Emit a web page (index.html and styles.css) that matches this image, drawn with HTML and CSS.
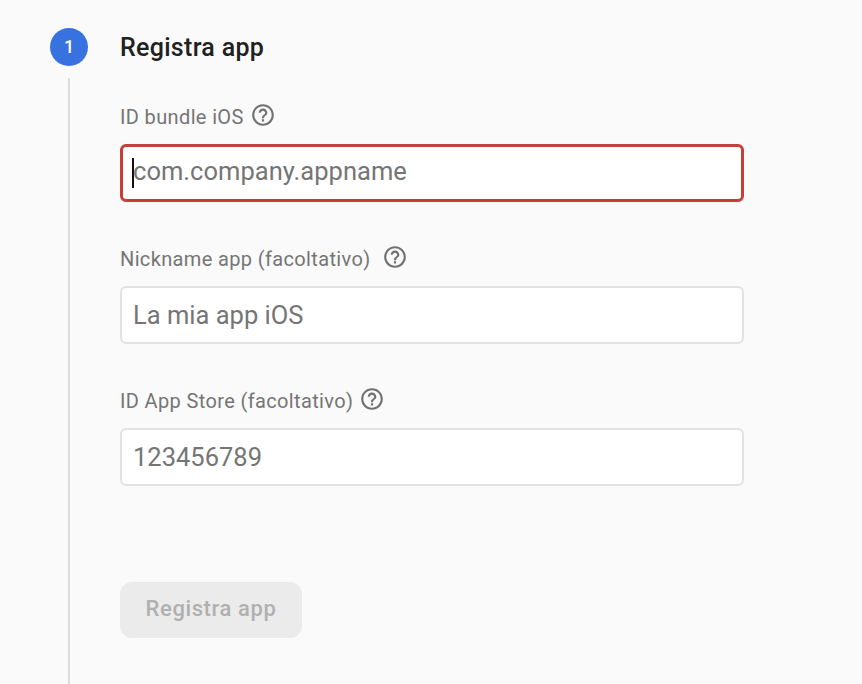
FILE: index.html
```html
<!DOCTYPE html>
<html lang="it">
<head>
<meta charset="utf-8">
<title>Registra app</title>
<link rel="stylesheet" href="styles.css">
</head>
<body>
<svg width="0" height="0" class="defs" aria-hidden="true">
  <symbol id="help" viewBox="0 0 24 24"><path d="M11 18h2v-2h-2v2zm1-16C6.480 2 2 6.480 2 12s4.480 10 10 10 10-4.480 10-10S17.520 2 12 2zm0 18c-4.410 0-8-3.590-8-8s3.590-8 8-8 8 3.590 8 8-3.590 8-8 8zm0-14c-2.210 0-4 1.790-4 4h2c0-1.100.9-2 2-2s2 .9 2 2c0 2-3 1.750-3 5h2c0-2.250 3-2.500 3-5 0-2.210-1.790-4-4-4z"/></symbol>
</svg>
<main class="step">
  <div class="rail"><span class="number">1</span><span class="line"></span></div>
  <form class="content">
    <h1 class="title">Registra app</h1>
    <div class="field">
      <div class="label bundle"><span>ID bundle iOS</span><svg class="help"><use href="#help"/></svg></div>
      <div class="input error"><span class="caret"></span><span class="hint">com.company.appname</span></div>
    </div>
    <div class="field">
      <div class="label nickname"><span>Nickname app (facoltativo)</span><svg class="help"><use href="#help"/></svg></div>
      <div class="input"><span class="hint">La mia app iOS</span></div>
    </div>
    <div class="field">
      <div class="label store"><span>ID App Store (facoltativo)</span><svg class="help"><use href="#help"/></svg></div>
      <div class="input"><span class="hint">123456789</span></div>
    </div>
    <button class="submit" type="button" disabled>Registra app</button>
  </form>
</main>
</body>
</html>
```

FILE: styles.css
```css
* { box-sizing: border-box; }
body { margin: 0; height: 684px; overflow: hidden; background: #fafafa; font-family: Roboto, sans-serif; }
.defs { display: none; }
.step { display: flex; height: 684px; padding: 28px 0 0 50px; }
.rail { width: 38px; margin-right: 32px; display: flex; flex-direction: column; align-items: center; }
.number { width: 38px; height: 38px; border-radius: 50%; background: #3871e0; color: #fff; font-size: 18px; font-weight: 500; line-height: 38px; text-align: center; }
.line { width: 2px; flex: 1; margin-top: 12px; background: #dcdcdc; }
.content { width: 624px; }
.title { margin: 0 0 32px; font-size: 25px; line-height: 40px; font-weight: 500; letter-spacing: .3px; color: #212121; }
.field { height: 142px; }
.label { display: flex; height: 34px; align-items: flex-start; font-size: 20px; line-height: 34px; letter-spacing: .36px; color: #757575; white-space: nowrap; }
.label.bundle, .label.store { gap: 6px; }
.label.nickname { gap: 11px; }
.help { width: 26px; height: 26px; margin-top: 2px; fill: #717171; }
.input { display: flex; align-items: center; height: 58px; margin-top: 10px; padding: 0 11px; border: 2px solid #e2e2e2; border-radius: 6px; background: #fff; font-size: 25.5px; color: #757575; }
.input.error { border: 3px solid #c53e37; padding: 0 9px; }
.error .hint { margin-bottom: 5px; letter-spacing: .03px; }
.caret { width: 2px; height: 30px; margin-right: -1px; background: #111; }
.submit { display: block; width: 182px; height: 56px; margin-top: 56px; padding: 0 0 3px; border: 0; border-radius: 12px; background: #ebebeb; color: #b0b0b0; font: 500 22px Roboto, sans-serif; letter-spacing: .6px; }
```
